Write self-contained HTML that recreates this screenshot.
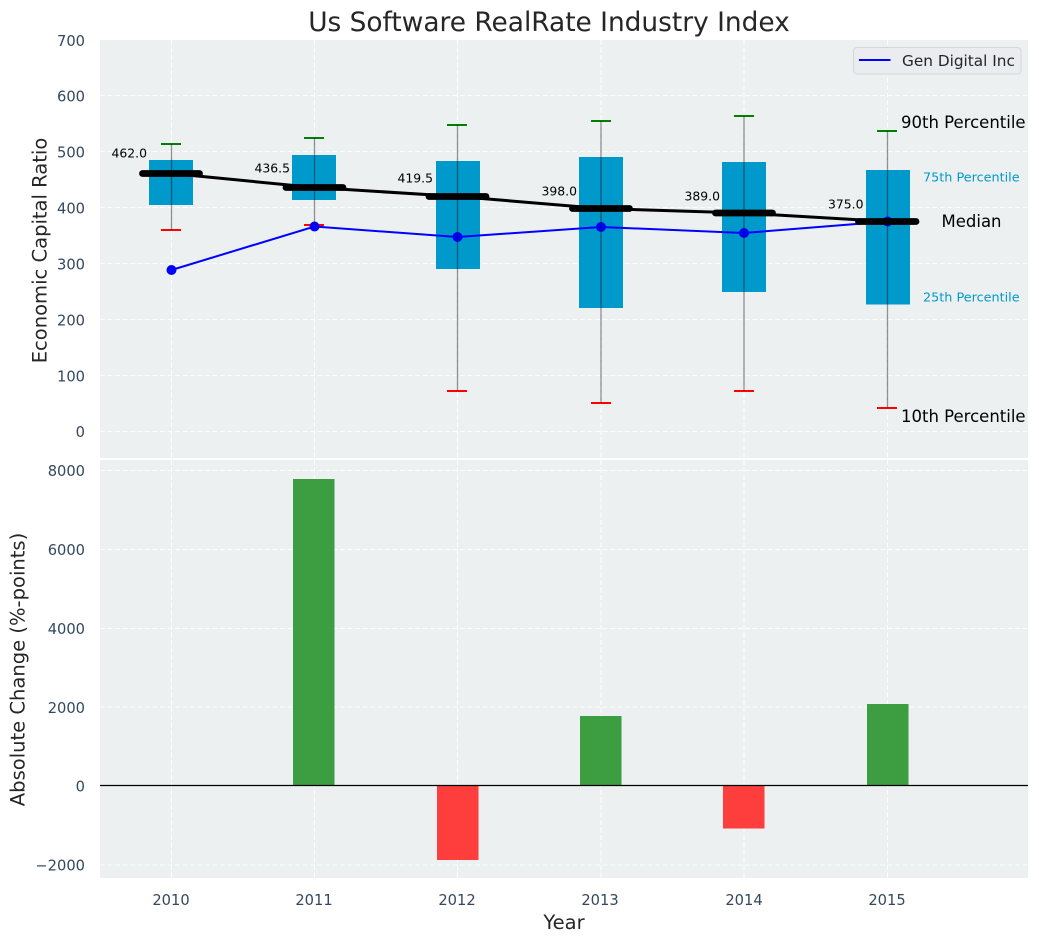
<!DOCTYPE html>
<html><head><meta charset="utf-8"><style>
html,body{margin:0;padding:0;background:#fff}
svg{display:block}
text{font-family:"DejaVu Sans",sans-serif}
.t{font-size:14.67px;fill:#34495e}
.l{font-size:19.55px;fill:#262626}
.g{stroke:#fff;stroke-width:1.1;stroke-dasharray:5 2.5;opacity:.9}
.b{fill:#0099cc;opacity:1}
.w{stroke:#000;stroke-opacity:.42;stroke-width:1.3}
.c1{stroke:#008000;stroke-width:2}
.c2{stroke:#ff0000;stroke-width:2}
.m{stroke:#000;stroke-width:6.8;stroke-linecap:round}
.v{font-size:12.4px;fill:#000}
.a{font-size:16.5px;fill:#000}
.p{font-size:12.8px;fill:#0099cc}
</style></head><body>
<svg width="1039" height="942" viewBox="0 0 1039 942" xmlns="http://www.w3.org/2000/svg">
<rect width="1039" height="942" fill="#fff"/>
<text x="549" y="31" text-anchor="middle" style="font-size:26.4px;fill:#262626">Us Software RealRate Industry Index</text>
<rect x="100" y="40" width="928" height="418" fill="#ecf0f1"/>
<rect x="100" y="460" width="928" height="418" fill="#ecf0f1"/>
<g class="g">
<line x1="100" x2="1028" y1="95.5" y2="95.5"/><line x1="100" x2="1028" y1="151.5" y2="151.5"/><line x1="100" x2="1028" y1="207.5" y2="207.5"/><line x1="100" x2="1028" y1="263.5" y2="263.5"/><line x1="100" x2="1028" y1="319.5" y2="319.5"/><line x1="100" x2="1028" y1="375.5" y2="375.5"/><line x1="100" x2="1028" y1="431.5" y2="431.5"/>
<line x1="100" x2="1028" y1="470.5" y2="470.5"/><line x1="100" x2="1028" y1="549.5" y2="549.5"/><line x1="100" x2="1028" y1="628.5" y2="628.5"/><line x1="100" x2="1028" y1="707" y2="707"/><line x1="100" x2="1028" y1="865" y2="865"/>
<line x1="171.5" x2="171.5" y1="40" y2="458"/><line x1="314.5" x2="314.5" y1="40" y2="458"/><line x1="457.5" x2="457.5" y1="40" y2="458"/><line x1="601" x2="601" y1="40" y2="458"/><line x1="744" x2="744" y1="40" y2="458"/><line x1="887.5" x2="887.5" y1="40" y2="458"/>
<line x1="171.5" x2="171.5" y1="460" y2="878"/><line x1="314.5" x2="314.5" y1="460" y2="878"/><line x1="457.5" x2="457.5" y1="460" y2="878"/><line x1="601" x2="601" y1="460" y2="878"/><line x1="744" x2="744" y1="460" y2="878"/><line x1="887.5" x2="887.5" y1="460" y2="878"/>
</g>
<!-- boxes -->
<rect class="b" x="149" y="160" width="44" height="45"/>
<rect class="b" x="292" y="155" width="44" height="45"/>
<rect class="b" x="436" y="161" width="44" height="108"/>
<rect class="b" x="579" y="157" width="44" height="151"/>
<rect class="b" x="722" y="162" width="44" height="130"/>
<rect class="b" x="866" y="170" width="44" height="134.500"/>
<!-- caps -->
<line class="c1" x1="161" x2="181" y1="144" y2="144"/><line class="c2" x1="161" x2="181" y1="230" y2="230"/>
<line class="c1" x1="304" x2="324" y1="138" y2="138"/><line class="c2" x1="304" x2="324" y1="225" y2="225"/>
<line class="c1" x1="447" x2="467" y1="125" y2="125"/><line class="c2" x1="447" x2="467" y1="391" y2="391"/>
<line class="c1" x1="591" x2="611" y1="121" y2="121"/><line class="c2" x1="591" x2="611" y1="403" y2="403"/>
<line class="c1" x1="734" x2="754" y1="116" y2="116"/><line class="c2" x1="734" x2="754" y1="391" y2="391"/>
<line class="c1" x1="877" x2="897" y1="131" y2="131"/><line class="c2" x1="877" x2="897" y1="408" y2="408"/>
<!-- blue line -->
<polyline points="171.500,270 314.500,226.500 457.500,237 601,227 744,233 887.500,221.500" fill="none" stroke="#0000ff" stroke-width="2"/>
<g fill="#0000ff"><circle cx="171.500" cy="270" r="5"/><circle cx="314.500" cy="226.500" r="5"/><circle cx="457.500" cy="237" r="5"/><circle cx="601" cy="227" r="5"/><circle cx="744" cy="233" r="5"/><circle cx="887.500" cy="221.500" r="5"/></g>
<!-- whiskers -->
<line class="w" x1="171.500" x2="171.500" y1="144" y2="230"/>
<line class="w" x1="314.500" x2="314.500" y1="138" y2="225"/>
<line class="w" x1="457.500" x2="457.500" y1="125" y2="391"/>
<line class="w" x1="601" x2="601" y1="121" y2="403"/>
<line class="w" x1="744" x2="744" y1="116" y2="391"/>
<line class="w" x1="887.500" x2="887.500" y1="131" y2="408"/>
<!-- median -->
<polyline points="171.500,173.500 314.500,187.500 457.500,196.500 601,208.500 744,213 887.500,221.500" fill="none" stroke="#000" stroke-width="3"/>
<line class="m" x1="142.500" x2="199.500" y1="173.500" y2="173.500"/>
<line class="m" x1="286" x2="343" y1="187.500" y2="187.500"/>
<line class="m" x1="429" x2="486" y1="196.500" y2="196.500"/>
<line class="m" x1="572.500" x2="629.500" y1="208.500" y2="208.500"/>
<line class="m" x1="715.500" x2="772.500" y1="213" y2="213"/>
<line class="m" x1="858.500" x2="916" y1="221.500" y2="221.500"/>
<!-- values -->
<text class="v" x="111.500" y="157.500">462.0</text>
<text class="v" x="254.500" y="172.500">436.5</text>
<text class="v" x="397.500" y="182.500">419.5</text>
<text class="v" x="541.500" y="195.500">398.0</text>
<text class="v" x="684.500" y="200.500">389.0</text>
<text class="v" x="828" y="208.500">375.0</text>
<!-- annotations -->
<text class="a" x="901" y="128">90th Percentile</text>
<text class="p" x="923" y="181.500">75th Percentile</text>
<text class="a" x="941.500" y="227">Median</text>
<text class="p" x="923" y="301.500">25th Percentile</text>
<text class="a" x="901" y="422">10th Percentile</text>
<!-- legend -->
<rect x="853.500" y="47.500" width="167.500" height="26.500" rx="3.500" fill="#ebecf0" stroke="#d5d6da"/>
<line x1="859" x2="890.500" y1="60" y2="60" stroke="#0000ff" stroke-width="2"/>
<text x="902" y="66" style="font-size:15.3px;fill:#262626">Gen Digital Inc</text>
<!-- bars -->
<rect x="293" y="479" width="41.500" height="306.500" fill="#2e9632" opacity=".92"/>
<rect x="437" y="785.500" width="41.500" height="74.500" fill="#ff2e2e" opacity=".92"/>
<rect x="580" y="716" width="41.500" height="69.500" fill="#2e9632" opacity=".92"/>
<rect x="723" y="785.500" width="41.500" height="43" fill="#ff2e2e" opacity=".92"/>
<rect x="867" y="704" width="41.500" height="81.500" fill="#2e9632" opacity=".92"/>
<line x1="100" x2="1028" y1="785.500" y2="785.500" stroke="#000" stroke-width="1.200"/>
<!-- y ticks -->
<g class="t" text-anchor="end">
<text x="85" y="46">700</text><text x="85" y="101.500">600</text><text x="85" y="157.500">500</text><text x="85" y="213.500">400</text><text x="85" y="269.500">300</text><text x="85" y="325.500">200</text><text x="85" y="381.500">100</text><text x="85" y="437">0</text>
<text x="85" y="476">8000</text><text x="85" y="555">6000</text><text x="85" y="634">4000</text><text x="85" y="713">2000</text><text x="85" y="791.500">0</text><text x="85" y="870.500">−2000</text>
</g>
<g class="t" text-anchor="middle">
<text x="171" y="905">2010</text><text x="314" y="905">2011</text><text x="457" y="905">2012</text><text x="600" y="905">2013</text><text x="744" y="905">2014</text><text x="887" y="905">2015</text>
</g>
<text class="l" x="564" y="929" text-anchor="middle">Year</text>
<text class="l" transform="translate(46.500,250.500) rotate(-90)" text-anchor="middle">Economic Capital Ratio</text>
<text class="l" transform="translate(24.500,669.500) rotate(-90)" text-anchor="middle">Absolute Change (%-points)</text>
</svg>
</body></html>
